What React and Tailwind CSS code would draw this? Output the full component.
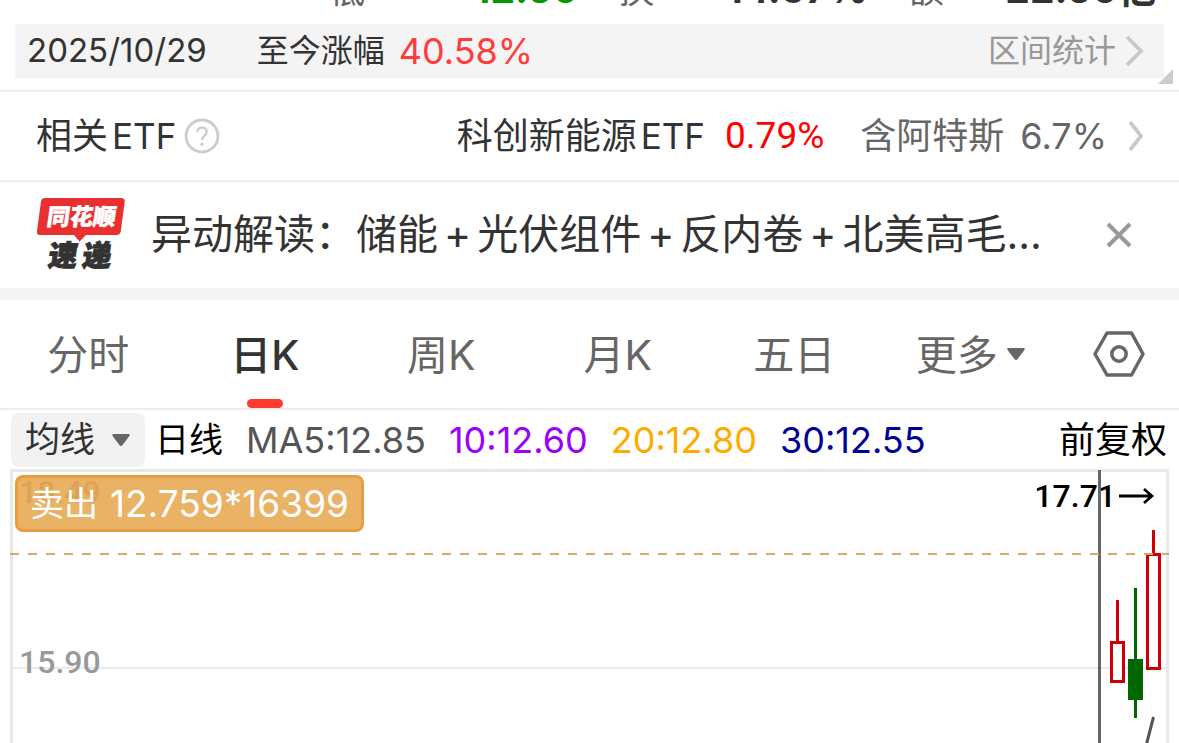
const quotes = [
  { label: '低', value: '12.60', color: 'text-[#009900]' },
  { label: '换', value: '14.57%', color: 'text-[#333333]' },
  { label: '额', value: '22.60亿', color: 'text-[#333333]' },
];

const topics = ['储能', '光伏组件', '反内卷', '北美高毛...'];

const tabs = [
  { key: 'minute', label: '分时' },
  { key: 'day', label: '日K' },
  { key: 'week', label: '周K' },
  { key: 'month', label: '月K' },
  { key: 'five', label: '五日' },
];

const averages = [
  { key: 'ma5', label: 'MA5:12.85', color: 'text-[#555555]' },
  { key: 'ma10', label: '10:12.60', color: 'text-[#9900ff]' },
  { key: 'ma20', label: '20:12.80', color: 'text-[#ffaa00]' },
  { key: 'ma30', label: '30:12.55', color: 'text-[#000099]' },
];

function Caret({ className }) {
  return (
    <svg width="20" height="14" viewBox="0 0 20 14" className={className}>
      <path d="M2.5 1h15c1.2 0 1.6 1 .9 1.900l-7 9.300c-.8 1-2 1-2.800 0l-7-9.300C.9 2 1.300 1 2.500 1Z" fill="currentColor" />
    </svg>
  );
}

function Chevron({ size }) {
  return (
    <svg width={size === 'lg' ? 20 : 16} height="32" viewBox={size === 'lg' ? '0 0 20 32' : '0 0 16 32'} fill="none" stroke="#c8c8c8" strokeWidth="3.800">
      <path d={size === 'lg' ? 'M3 2l14 14L3 30' : 'M3 2l11 14L3 30'} />
    </svg>
  );
}

function QuoteRow() {
  return (
    <div className="grid h-6 grid-cols-4 content-end gap-x-10 overflow-hidden pb-4 pl-10 pr-[22px]">
      {quotes.map((item, index) => (
        <div key={item.label} className={`flex items-baseline justify-between leading-9 ${index === 0 ? 'col-start-2' : ''}`}>
          <span className="text-[36px] text-[#666666]">{item.label}</span>
          <span className={`text-[39px] font-bold ${item.color}`}>{item.value}</span>
        </div>
      ))}
    </div>
  );
}

function RangeBar() {
  return (
    <div className="relative border-b-2 border-[#eeeeee] px-[15px] pb-3">
      <div className="flex h-[54px] items-center bg-[#f4f4f4] pl-3 pr-5 text-[32px] text-[#333333]">
        <span className="text-[33px]">2025/10/29</span>
        <span className="ml-[50px]">至今涨幅</span>
        <span className="ml-[14px] text-[36px] text-[#ff3b3b]">40.58%</span>
        <button className="ml-auto flex items-center gap-2 text-[#999999]">
          区间统计
          <Chevron size="lg" />
        </button>
      </div>
      <svg width="15" height="15" viewBox="0 0 15 15" className="absolute bottom-1.5 right-1.5">
        <path d="M15 0v15H0Z" fill="#cccccc" />
      </svg>
    </div>
  );
}

function EtfRow() {
  return (
    <div className="flex h-[90px] items-center border-b-2 border-[#eeeeee] px-9 text-[36px] text-[#333333]">
      <span>相关</span>
      <span className="ml-1 text-[35px]">ETF</span>
      <button aria-label="说明" className="ml-2">
        <svg width="36" height="36" viewBox="0 0 36 36" fill="none" stroke="#cccccc">
          <circle cx="18" cy="18" r="16" strokeWidth="2.800" />
          <path d="M13.300 14.200c0-2.900 2-4.700 4.700-4.700s4.700 1.800 4.700 4.300c0 3.600-4.700 4.100-4.700 8.200" strokeWidth="2.400" />
          <circle cx="18" cy="26.200" r="1.600" fill="#cccccc" stroke="none" />
        </svg>
      </button>
      <a href="#etf" className="ml-auto flex items-center">
        <span>科创新能源</span>
        <span className="ml-1 text-[35px]">ETF</span>
        <span className="ml-5 font-['Roboto'] text-[37px] text-[#ff0000]">0.79%</span>
        <span className="ml-9 text-[#666666]">含阿特斯</span>
        <span className="ml-4 mr-5 text-[#666666]">6.7%</span>
        <Chevron />
      </a>
    </div>
  );
}

function ExpressLogo() {
  return (
    <svg width="90" height="76" viewBox="0 1 90 76">
      <path d="M9 2h76c2.500 0 4 1.500 3.700 4l-4 29.500c-.3 2-1.700 3.500-4 3.500H50l-6.500 6.500L38 39H4c-2.500 0-3.400-1.500-3-4L5 5.500C5.300 3.400 6.700 2 9 2Z" fill="#e83030" />
      <g transform="skewX(-8)" style={{ fontWeight: 900 }}>
        <text x="14" y="29" fontSize="23" fill="#ffffff" stroke="#ffffff" strokeWidth="0.500">同花顺</text>
        <text x="21" y="70" fontSize="29" fill="#333333" stroke="#333333" strokeWidth="1">速</text>
        <text x="55" y="70" fontSize="29" fill="#333333" stroke="#333333" strokeWidth="1">递</text>
      </g>
    </svg>
  );
}

function NewsRow() {
  return (
    <div className="flex h-[118px] items-center border-b-12 border-[#f4f4f4] pl-9 pr-[46px]">
      <ExpressLogo />
      <a href="#news" className="ml-[25px] min-w-0 flex-1 truncate text-[41px] text-[#333333]">
        异动解读：
        {topics.map((topic, index) => (
          <span key={topic}>
            {index > 0 && <span className="mx-1.5">+</span>}
            {topic}
          </span>
        ))}
      </a>
      <button aria-label="关闭" className="ml-6">
        <svg width="28" height="28" viewBox="0 0 28 28" stroke="#999999" strokeWidth="4">
          <path d="M3 3l22 22M25 3L3 25" />
        </svg>
      </button>
    </div>
  );
}

function PeriodTabs() {
  return (
    <div className="flex h-[110px] border-b-2 border-[#eeeeee] text-[41px] text-[#666666]">
      {tabs.map((tab) => (
        <button key={tab.key} className={`relative flex-1 pt-1 ${tab.key === 'day' ? 'font-medium text-[#333333]' : ''}`}>
          {tab.label}
          {tab.key === 'day' && <span className="absolute bottom-0 left-1/2 h-[9px] w-9 -translate-x-1/2 rounded-full bg-[#ff3b30]" />}
        </button>
      ))}
      <button className="flex flex-1 items-center justify-center gap-2">
        <span className="pt-1">更多</span>
        <Caret />
      </button>
      <button aria-label="设置" className="flex w-[120px] items-center justify-center">
        <svg width="52" height="46" viewBox="0 0 52 46" fill="none" stroke="#666666" strokeWidth="3.500" strokeLinejoin="round">
          <path d="M14 2h24.500L50 23 38.500 44H14L2 23Z" />
          <circle cx="26" cy="23" r="7.200" />
        </svg>
      </button>
    </div>
  );
}

function AverageRow() {
  return (
    <div className="flex h-[59px] items-center pl-[11px] pr-3 text-[36px] text-black">
      <button className="flex h-[54px] items-center gap-4 rounded-lg bg-[#f2f2f2] px-[14px] text-[35px] text-[#333333]">
        均线
        <Caret className="text-[#666666]" />
      </button>
      <span className="ml-[10px] text-[34px]">日线</span>
      {averages.map((item) => (
        <span key={item.key} className={`ml-[23px] ${item.color}`}>{item.label}</span>
      ))}
      <span className="ml-auto">前复权</span>
    </div>
  );
}

function Chart() {
  return (
    <div className="relative mx-2.5 min-h-[274px] flex-1 border-x-3 border-t-3 border-[#e8e8e8] font-['Roboto'] text-[32px] font-medium">
      <span className="absolute left-1.5 top-0 leading-10 text-[#999999]">18.49</span>
      <div className="absolute inset-x-0 top-[195px] h-0.5 bg-[#eaeaea]" />
      <span className="absolute left-1.5 top-[170px] leading-10 text-[#999999]">15.90</span>
      <div className="absolute right-3 top-1 flex items-center gap-0.5 leading-10 text-black">
        17.71
        <svg width="36" height="18" viewBox="0 0 36 18" fill="none" stroke="#000000" strokeWidth="2.800">
          <path d="M1 9h33M26 2l8 7-8 7" />
        </svg>
      </div>
      <svg width="70" height="276" viewBox="0 -2 70 276" className="absolute -top-0.5 right-0">
        <path d="M3.500 -2v276" stroke="#666666" strokeWidth="3" />
        <g fill="none" stroke="#cc0000" strokeWidth="3">
          <path d="M21.500 128v42" />
          <path d="M15.500 170.500h12v39h-12Z" fill="#ffffff" />
          <path d="M57.500 58v25" />
          <path d="M51.500 82.500h12v114h-12Z" fill="#ffffff" />
        </g>
        <path d="M39.500 116v130" stroke="#006600" strokeWidth="3" />
        <path d="M32 187h15v41H32Z" fill="#006600" />
        <path d="M57.500 245L50 274" stroke="#555555" strokeWidth="3" />
      </svg>
      <div className="absolute -inset-x-[3px] top-[81px]">
        <svg width="100%" height="2" className="block">
          <line x1="0" y1="1" x2="100%" y2="1" stroke="#d9aa66" strokeWidth="2" strokeDasharray="9 9" />
        </svg>
      </div>
      <div className="absolute left-0.5 top-[3px] flex h-[57px] items-center gap-3 rounded-lg border-3 border-[#e69a38]/80 bg-[#e6a54a]/85 px-3 font-['Inter','Noto_Sans_CJK_SC',sans-serif] text-[34px] font-normal text-white [font-feature-settings:'calt'_0]">
        <span>卖出</span>
        <span className="text-[37px]">12.759*16399</span>
      </div>
    </div>
  );
}

export default function App() {
  return (
    <div lang="zh-CN" className="flex h-screen flex-col overflow-hidden bg-white font-['Inter','Noto_Sans_CJK_SC',sans-serif] whitespace-nowrap">
      <QuoteRow />
      <RangeBar />
      <EtfRow />
      <NewsRow />
      <PeriodTabs />
      <AverageRow />
      <Chart />
    </div>
  );
}
